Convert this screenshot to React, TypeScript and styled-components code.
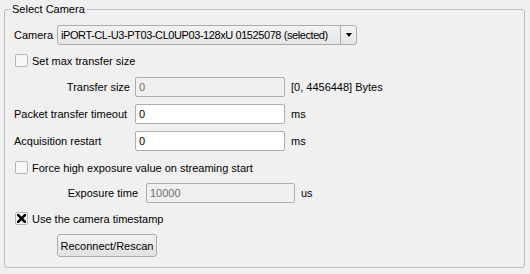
import styled, { createGlobalStyle } from 'styled-components'

const GlobalStyle = createGlobalStyle`
  html, body {
    margin: 0;
    background: #f0f0f0;
  }
  body {
    font-family: 'Liberation Sans', Arial, sans-serif;
    font-size: 11px;
    color: #000;
  }
`

export default function App () {
  return (
    <>
      <GlobalStyle />
      <Page>
        <Group>
          <Legend>Select Camera</Legend>
          <Row $mt={8} $h={20}>
            <Label $w={43}>Camera</Label>
            <Combo>
              <ComboText>iPORT-CL-U3-PT03-CL0UP03-128xU 01525078 (selected)</ComboText>
              <ComboArrow />
            </Combo>
          </Row>
          <Row $mt={8} $h={15}>
            <CheckItem label='Set max transfer size' />
          </Row>
          <Row $mt={9} $h={20}>
            <Label $w={121} $right $pr={5}>Transfer size</Label>
            <Input $w={150} disabled value='0' readOnly />
            <Unit>[0, 4456448] Bytes</Unit>
          </Row>
          <Row $mt={7} $h={20}>
            <Label $w={121}>Packet transfer timeout</Label>
            <Input $w={150} value='0' readOnly />
            <Unit>ms</Unit>
          </Row>
          <Row $mt={7} $h={20}>
            <Label $w={121}>Acquisition restart</Label>
            <Input $w={150} value='0' readOnly />
            <Unit>ms</Unit>
          </Row>
          <Row $mt={9} $h={15}>
            <CheckItem label='Force high exposure value on streaming start' />
          </Row>
          <Row $mt={8} $h={20}>
            <Label $w={132} $right $pr={8}>Exposure time</Label>
            <Input $w={149} disabled value='10000' readOnly />
            <Unit>us</Unit>
          </Row>
          <Row $mt={8} $h={15}>
            <CheckItem label='Use the camera timestamp' checked />
          </Row>
          <Row $mt={8} $h={23}>
            <Button>Reconnect/Rescan</Button>
          </Row>
        </Group>
      </Page>
    </>
  )
}

function CheckItem ({ label, checked }: { label: string, checked?: boolean }) {
  return (
    <Check>
      <Box>
        {checked && (
          <svg width='9' height='9' viewBox='0 0 9 9'>
            <path d='M1 1 L8 8 M8 1 L1 8' stroke='#000' strokeWidth='2.6' strokeLinecap='square' />
          </svg>
        )}
      </Box>
      <span>{label}</span>
    </Check>
  )
}

const Page = styled.div`
  padding: 1px 5px 0 4px;
  width: 530px;
  box-sizing: border-box;
`

const Group = styled.fieldset`
  margin: 0;
  padding: 0 0 10px 9px;
  border: 1px solid #bcbcbc;
  border-radius: 3px;
  min-width: 0;
`

const Legend = styled.legend`
  font-size: 11px;
  line-height: 16px;
  padding: 0 2px;
  margin-left: -4px;
`

const Row = styled.div<{ $mt: number, $h: number }>`
  display: flex;
  align-items: center;
  margin-top: ${p => p.$mt}px;
  height: ${p => p.$h}px;
`

const Label = styled.div<{ $w: number, $right?: boolean, $pr?: number }>`
  width: ${p => p.$w}px;
  flex: none;
  box-sizing: border-box;
  text-align: ${p => (p.$right ? 'right' : 'left')};
  padding-right: ${p => p.$pr ?? 0}px;
  white-space: nowrap;
`

const Combo = styled.div`
  width: 300px;
  height: 20px;
  box-sizing: border-box;
  border: 1px solid #acacac;
  border-radius: 3px;
  background: linear-gradient(#f3f3f3, #e6e6e6);
  display: flex;
  align-items: center;
`

const ComboText = styled.div`
  flex: 1;
  padding-left: 3px;
  letter-spacing: -0.42px;
  white-space: nowrap;
  overflow: hidden;
`

const ComboArrow = styled.div`
  width: 15px;
  height: 100%;
  border-left: 1px solid #acacac;
  display: flex;
  align-items: center;
  justify-content: center;
  &::after {
    content: '';
    border-left: 3.5px solid transparent;
    border-right: 3.5px solid transparent;
    border-top: 4px solid #000;
  }
`

const Input = styled.input<{ $w: number }>`
  width: ${p => p.$w}px;
  height: 20px;
  box-sizing: border-box;
  margin: 0;
  padding: 0 3px;
  border: 1px solid #abadb3;
  border-radius: 2px;
  background: #fff;
  font: inherit;
  color: #000;
  outline: none;
  &:disabled {
    background: #f0f0f0;
    border-color: #adadad;
    color: #6d6d6d;
  }
`

const Unit = styled.span`
  margin-left: 6px;
  white-space: nowrap;
`

const Check = styled.label`
  display: flex;
  align-items: center;
  gap: 4px;
  margin-left: 1px;
`

const Box = styled.span`
  width: 13px;
  height: 13px;
  box-sizing: border-box;
  border: 1px solid #b5b5b5;
  border-radius: 2px;
  background: #f7f7f7;
  display: flex;
  align-items: center;
  justify-content: center;
`

const Button = styled.button`
  margin-left: 43px;
  width: 100px;
  height: 23px;
  box-sizing: border-box;
  border: 1px solid #acacac;
  border-radius: 3px;
  background: linear-gradient(#f2f2f2, #e2e2e2);
  font: inherit;
  color: #000;
  padding: 0;
`
